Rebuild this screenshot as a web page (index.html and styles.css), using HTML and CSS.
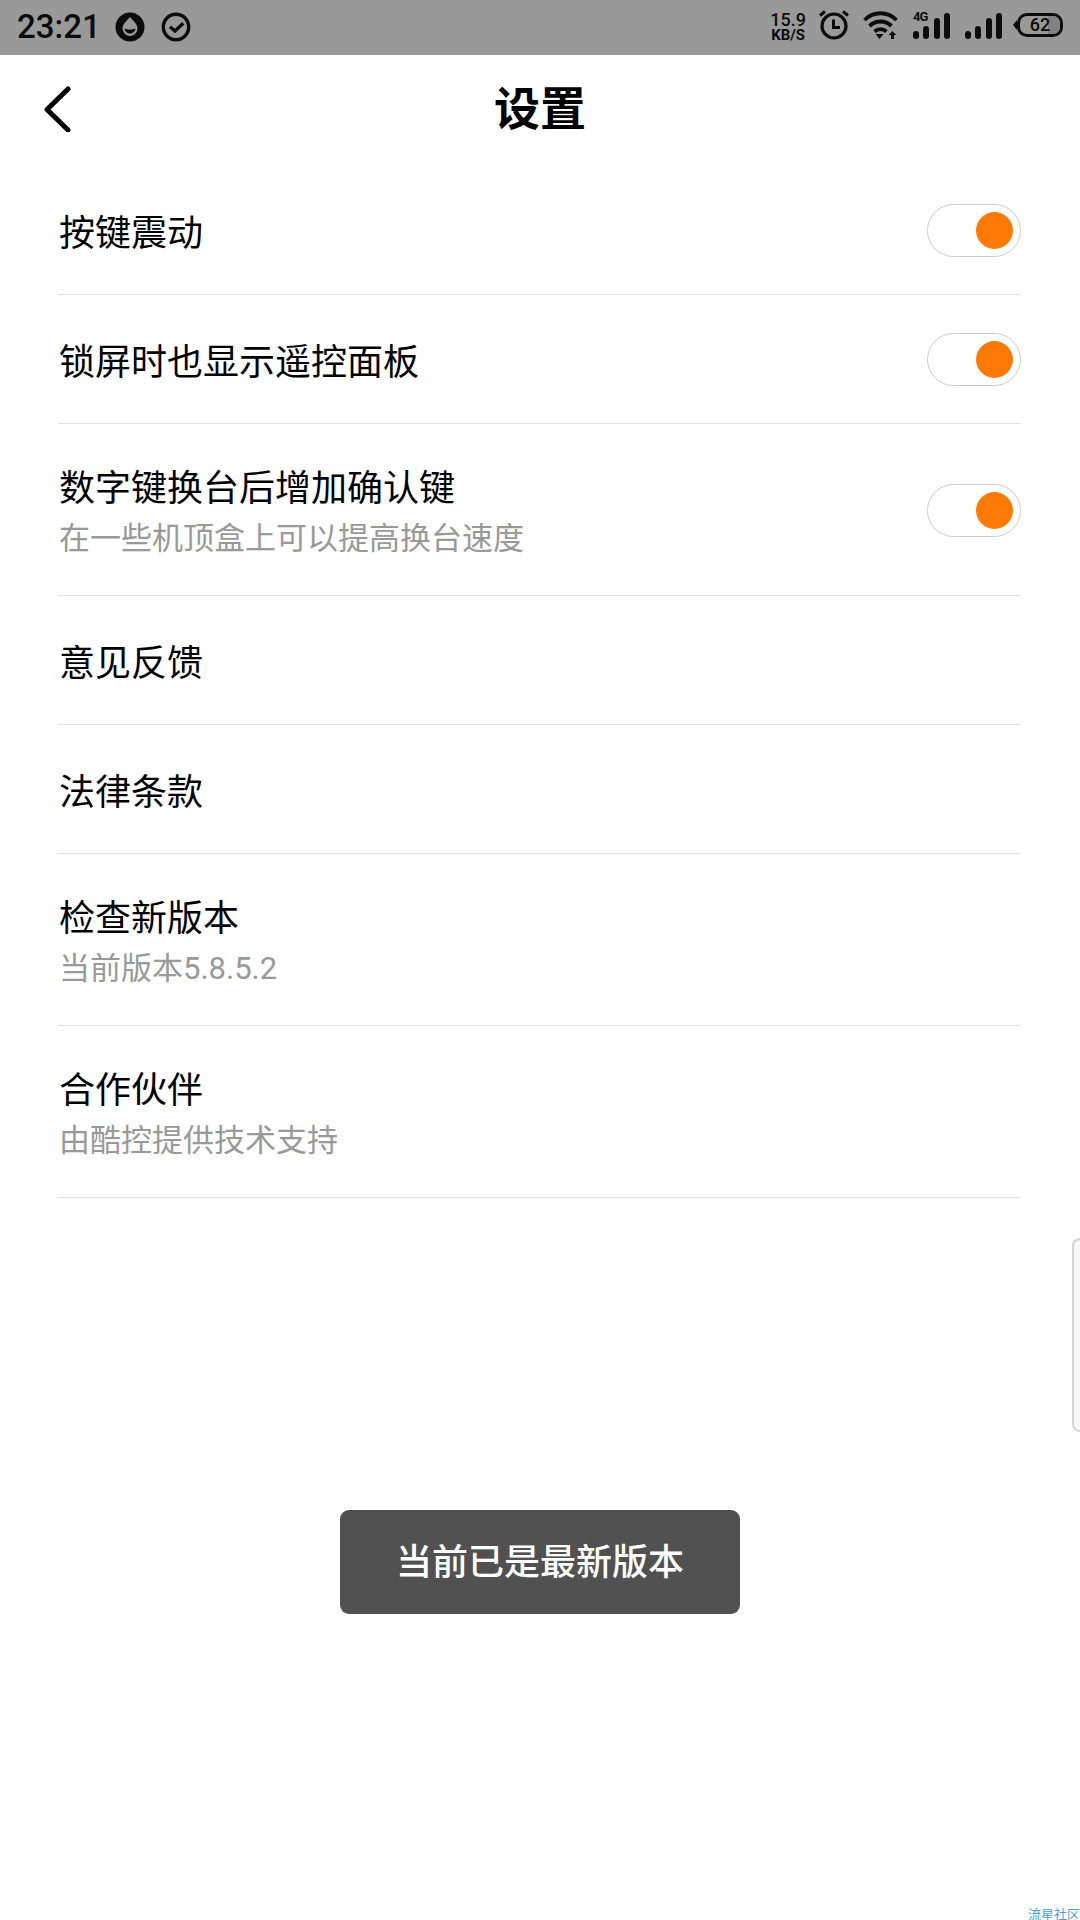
FILE: index.html
```html
<!DOCTYPE html>
<html lang="zh-CN">
<head>
  <meta charset="UTF-8" />
  <title>设置</title>
  <link rel="stylesheet" href="styles.css">
</head>
<body>
  <div class="statusbar">
    <div class="status-left">
      <span class="time">23:21</span>
      <svg class="face-icon" width="30" height="30" viewBox="0 0 30 30"><circle cx="15" cy="15" r="14.500" fill="#0c0c0c"/><path d="M15 5c3 3.500 7.500 7 7.500 11.500a7.500 7.500 0 0 1-15 0C7.500 12 12 8.500 15 5z" fill="#999"/><path d="M9.500 16.500c3 1.500 8 1.500 11 0c-.5 3.500-3 5-5.500 5s-5-1.500-5.500-5z" fill="#0c0c0c"/></svg>
      <svg class="check-icon" width="30" height="30" viewBox="0 0 30 30"><circle cx="15" cy="15" r="12.700" fill="none" stroke="#0c0c0c" stroke-width="3.400"/><path d="M9 14.700l5 4.300 8.300-7.700" fill="none" stroke="#0c0c0c" stroke-width="3.400"/></svg>
    </div>
    <div class="status-right">
      <div class="speed"><span class="speed-num">15.9</span><span>KB/S</span></div>
      <svg class="clock" width="32" height="30" viewBox="0 0 32 30"><circle cx="16" cy="16" r="12" fill="none" stroke="#0c0c0c" stroke-width="3.200"/><path d="M15.500 9.500v8h6.500" fill="none" stroke="#0c0c0c" stroke-width="3"/><path d="M2 5.500L7 1.500M30 5.500l-5-4" fill="none" stroke="#0c0c0c" stroke-width="3"/></svg>
      <svg class="wifi" width="35" height="28" viewBox="0 0 35 28"><path d="M1.500 9c9-9 23-9 32 0M6.500 15c6.500-6 15.500-6 22 0M11.500 20.500c3.500-3 8.500-3 12 0" fill="none" stroke="#0c0c0c" stroke-width="3.800"/><path d="M12.500 23h8l-4 5z" fill="#0c0c0c"/><path d="M29.500 20l3.800 4h-2.300v4h-3v-4h-2.300z" fill="#0c0c0c"/></svg>
      <div class="signal">
        <span class="net">4G</span>
        <svg width="37" height="26" viewBox="0 0 37 26"><rect x="0" y="18" width="6" height="8" rx="3" fill="#0c0c0c"/><rect x="10" y="13" width="6" height="13" rx="3" fill="#0c0c0c"/><rect x="21" y="5" width="6" height="21" rx="3" fill="#0c0c0c"/><rect x="31" y="0" width="6" height="26" rx="3" fill="#0c0c0c"/></svg>
      </div>
      <svg class="bars" width="37" height="26" viewBox="0 0 37 26"><rect x="0" y="18" width="6" height="8" rx="3" fill="#0c0c0c"/><rect x="10" y="13" width="6" height="13" rx="3" fill="#0c0c0c"/><rect x="21" y="5" width="6" height="21" rx="3" fill="#0c0c0c"/><rect x="31" y="0" width="6" height="26" rx="3" fill="#0c0c0c"/></svg>
      <div class="battery"><span class="nose"></span><span class="level"></span><span class="pct">62</span></div>
    </div>
  </div>

  <div class="titlebar">
    <svg class="back" width="30" height="46" viewBox="0 0 30 46"><path d="M25 3L4 23.500 25 44" fill="none" stroke="#000" stroke-width="5" stroke-linecap="round" stroke-linejoin="round"/></svg>
    <h1>设置</h1>
  </div>

  <div class="list">
    <div class="row">
      <div class="text"><div class="label">按键震动</div></div>
      <div class="switch"><span class="knob"></span></div>
    </div>
    <div class="row">
      <div class="text"><div class="label">锁屏时也显示遥控面板</div></div>
      <div class="switch"><span class="knob"></span></div>
    </div>
    <div class="row tall">
      <div class="text">
        <div class="label">数字键换台后增加确认键</div>
        <div class="sub">在一些机顶盒上可以提高换台速度</div>
      </div>
      <div class="switch"><span class="knob"></span></div>
    </div>
    <div class="row"><div class="text"><div class="label">意见反馈</div></div></div>
    <div class="row"><div class="text"><div class="label">法律条款</div></div></div>
    <div class="row tall">
      <div class="text">
        <div class="label">检查新版本</div>
        <div class="sub">当前版本5.8.5.2</div>
      </div>
    </div>
    <div class="row tall">
      <div class="text">
        <div class="label">合作伙伴</div>
        <div class="sub">由酷控提供技术支持</div>
      </div>
    </div>
  </div>

  <div class="edge-tab"></div>
  <div class="toast">当前已是最新版本</div>
  <div class="watermark">流星社区</div>
</body>
</html>
```

FILE: styles.css
```css
body {
  margin: 0;
  width: 1080px;
  height: 1920px;
  overflow: hidden;
  position: relative;
  background: #fff;
  color: #000;
  font-family: Roboto, "Noto Sans CJK SC", sans-serif;
}
.statusbar {
  height: 55px;
  background: #999;
  display: flex;
  justify-content: space-between;
  align-items: center;
  padding: 0 17px;
  color: #0c0c0c;
}
.status-left, .status-right {
  display: flex;
  align-items: center;
}
.time {
  font-size: 33px;
  font-weight: 500;
  width: 98px;
  margin-top: -2px;
}
.face-icon {
  margin-top: -2px;
}
.check-icon {
  margin-left: 16px;
  margin-top: -2px;
}
.speed {
  display: flex;
  flex-direction: column;
  align-items: center;
  font-size: 15px;
  font-weight: 700;
  line-height: 15px;
  margin-top: -2px;
}
.speed-num {
  font-size: 18px;
  line-height: 17px;
  font-weight: 500;
}
.clock {
  margin-left: 12px;
  margin-top: -5px;
}
.wifi {
  margin-left: 13px;
  margin-top: -5px;
}
.signal {
  margin-left: 15px;
  margin-top: -3px;
  position: relative;
}
.signal svg, .bars {
  display: block;
}
.net {
  position: absolute;
  left: 0;
  top: -3px;
  font-size: 13px;
  line-height: 13px;
  letter-spacing: -1px;
  font-weight: 700;
}
.bars {
  margin-left: 15px;
  margin-top: -3px;
}
.battery {
  position: relative;
  width: 46px;
  height: 24px;
  box-sizing: border-box;
  margin-left: 15px;
  margin-top: -5px;
  border: 3px solid #0c0c0c;
  border-radius: 10px;
  font-size: 18px;
  font-weight: 500;
  line-height: 18px;
  text-align: center;
}
.nose {
  position: absolute;
  left: -7px;
  top: 4px;
  width: 0;
  height: 0;
  border-top: 5px solid transparent;
  border-bottom: 5px solid transparent;
  border-right: 4px solid #0c0c0c;
}
.level {
  position: absolute;
  right: 0;
  top: 0;
  bottom: 0;
  width: 12px;
  background: #828282;
  border-radius: 0 7px 7px 0;
}
.pct {
  position: relative;
}
.titlebar {
  height: 110px;
  box-sizing: border-box;
  padding-bottom: 10px;
  display: flex;
  align-items: center;
  justify-content: center;
  position: relative;
}
.titlebar h1 {
  margin: 0;
  font-size: 46px;
  font-weight: 700;
}
.back {
  position: absolute;
  left: 43px;
  top: 31px;
}
.list {
  margin: 1px 59px 0 58px;
}
.row {
  height: 129px;
  box-sizing: border-box;
  border-bottom: 1px solid #e2e2e2;
  display: flex;
  align-items: center;
  justify-content: space-between;
}
.row.tall {
  height: 172px;
}
.text {
  padding: 8px 0 0 1px;
}
.label {
  font-size: 36px;
  line-height: 50px;
}
.sub {
  font-size: 31px;
  line-height: 50px;
  color: #999;
}
.switch {
  width: 94px;
  height: 53px;
  box-sizing: border-box;
  margin-top: 1px;
  border: 1px solid #ccc;
  border-radius: 27px;
  display: flex;
  align-items: center;
  justify-content: flex-end;
  padding-right: 7px;
}
.knob {
  width: 37px;
  height: 37px;
  border-radius: 50%;
  background: #ff7a05;
}
.edge-tab {
  position: absolute;
  right: 0;
  top: 1238px;
  width: 6px;
  height: 190px;
  border: 2px solid #d4d4d4;
  border-right: none;
  border-radius: 10px 0 0 10px;
  background: #f7f7f7;
}
.toast {
  position: absolute;
  left: 340px;
  top: 1510px;
  width: 400px;
  height: 104px;
  line-height: 107px;
  text-align: center;
  background: #515151;
  color: #fff;
  font-size: 36px;
  font-weight: 500;
  border-radius: 9px;
}
.watermark {
  position: absolute;
  right: 0;
  bottom: -2px;
  font-size: 13px;
  line-height: 15px;
  color: #4a9fd8;
}
```
